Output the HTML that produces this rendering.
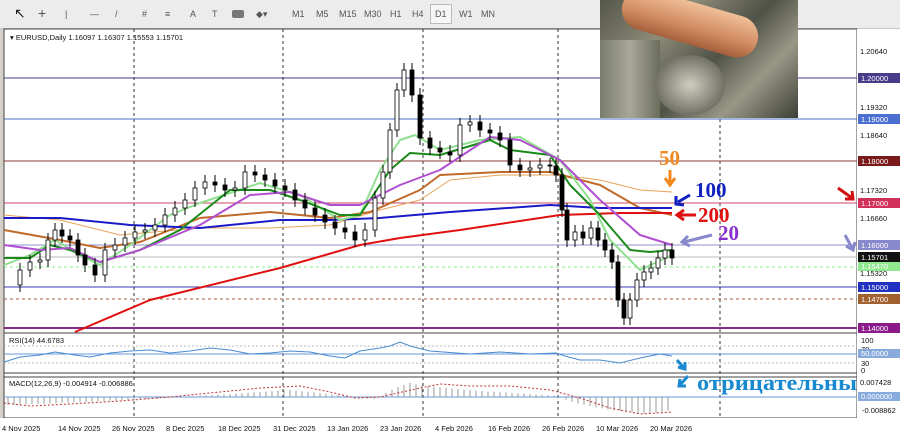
<!DOCTYPE html>
<html><head><meta charset="utf-8"><style>
body{margin:0;width:900px;height:438px;overflow:hidden;background:#d4d0c8;font-family:"Liberation Sans",sans-serif;position:relative}
.tb{position:absolute;left:0;top:0;width:900px;height:28px;background:#ececec;border-bottom:1px solid #c8c8c8}
.tb span{position:absolute;top:9px;font-size:9px;color:#555}
svg{position:absolute;left:0;top:0}
.photo{position:absolute;left:600px;top:0;width:198px;height:118px;overflow:hidden;background:linear-gradient(135deg,#55574a 0%,#8d8a78 30%,#4f5246 55%,#9a9786 75%,#3d3f36 100%)}
.roll{position:absolute;left:20px;top:2px;width:140px;height:42px;border-radius:21px;background:linear-gradient(180deg,#f0c09a,#d08a60 60%,#a5603c);transform:rotate(16deg)}
.face{position:absolute;left:55px;top:55px;width:70px;height:60px;border-radius:50%;background:radial-gradient(#d0cdc0,#4a4a40)}
.bill{position:absolute;left:0;top:40px;width:60px;height:78px;background:linear-gradient(90deg,#7a7c6c,#a8a898,#6a6c5c)}
</style></head><body>
<div class="tb">
<span style="left:14px;font-size:14px;top:5px;color:#222">&#x2196;</span>
<span style="left:38px;font-size:14px;top:5px">+</span>
<span style="left:65px">|</span><span style="left:90px">—</span><span style="left:115px">/</span>
<span style="left:142px">#</span><span style="left:165px">≡</span><span style="left:190px">A</span><span style="left:212px">T</span>
<span style="left:232px;top:10px;width:12px;height:8px;background:#777;border-radius:2px"></span>
<span style="left:256px">◆▾</span>
<span style="left:292px">M1</span><span style="left:316px">M5</span><span style="left:339px">M15</span><span style="left:364px">M30</span><span style="left:390px">H1</span><span style="left:412px">H4</span>
<span style="left:430px;top:4px;padding:4px 4px;border:1px solid #bbb;background:#f6f6f6">D1</span>
<span style="left:459px">W1</span><span style="left:481px">MN</span>
</div>
<svg width="900" height="438" id="s">
<rect x="4" y="29" width="853" height="389" fill="#fff" stroke="#444"/>
<rect x="4" y="333" width="853" height="40" fill="#fff" stroke="#444"/>
<rect x="4" y="377" width="853" height="41" fill="#fff" stroke="#444"/>
<rect x="857" y="29" width="43" height="409" fill="#fff"/>
<rect x="0" y="418" width="900" height="20" fill="#fff"/>
<g stroke="#333" stroke-dasharray="3,3" stroke-width="1">
<line x1="134" y1="29" x2="134" y2="418"/><line x1="283" y1="29" x2="283" y2="418"/><line x1="423" y1="29" x2="423" y2="418"/><line x1="558" y1="29" x2="558" y2="418"/><line x1="720" y1="29" x2="720" y2="418"/></g>
<g stroke-width="1">
<line x1="4" y1="78" x2="857" y2="78" stroke="#3d3d8c"/>
<line x1="4" y1="119" x2="857" y2="119" stroke="#4a6fc0"/>
<line x1="4" y1="161" x2="857" y2="161" stroke="#8c3a3a"/>
<line x1="4" y1="203" x2="857" y2="203" stroke="#c84a6a"/>
<line x1="4" y1="245" x2="857" y2="245" stroke="#9090cc"/>
<line x1="4" y1="257" x2="857" y2="257" stroke="#bbb"/>
<line x1="4" y1="267" x2="857" y2="267" stroke="#8e8" stroke-dasharray="3,3"/>
<line x1="4" y1="287" x2="857" y2="287" stroke="#3838b0"/>
<line x1="4" y1="299" x2="857" y2="299" stroke="#a0603a" stroke-dasharray="3,3"/>
<line x1="4" y1="328" x2="857" y2="328" stroke="#8a2a8a" stroke-width="2"/>
</g>
<g fill="none" stroke-linejoin="round">
<polyline stroke="#e8a45a" stroke-width="1" points="4,215 60,220 120,235 200,228 270,228 330,225 380,210 420,200 450,180 500,175 560,175 600,180 640,190 672,192"/>
<polyline stroke="#c06a2a" stroke-width="2" points="4,230 60,240 100,248 140,242 200,218 270,212 330,218 370,212 420,190 440,175 500,172 550,172 600,185 640,208 672,215"/>
<polyline stroke="#1a1ac8" stroke-width="2" points="4,218 60,218 130,225 200,228 280,220 330,220 380,218 450,212 550,205 600,208 672,208"/>
<polyline stroke="#e01010" stroke-width="2" points="75,332 150,300 280,268 360,245 400,238 460,230 560,215 620,213 672,213"/>
<polyline stroke="#90e090" stroke-width="2" points="4,265 30,255 55,240 80,255 100,265 130,245 170,215 200,203 260,183 300,195 340,220 360,215 380,170 400,140 415,135 440,150 480,140 520,137 560,160 590,200 610,240 640,270 672,255"/>
<polyline stroke="#1a8a1a" stroke-width="2" points="4,258 30,258 50,245 70,250 100,262 140,250 180,230 230,190 270,190 300,200 340,215 360,215 390,170 410,153 440,155 490,140 510,150 550,155 570,185 600,215 630,250 650,252 672,250"/>
<polyline stroke="#b050d0" stroke-width="2" points="4,245 40,250 70,248 100,262 140,250 200,225 250,195 290,192 330,205 360,205 400,185 440,170 490,137 520,140 560,160 600,200 640,235 672,245"/>
</g>
<g id="c"></g>
<line x1="4" y1="354" x2="857" y2="354" stroke="#6a9ad8"/>
<line x1="4" y1="346" x2="857" y2="346" stroke="#bbb" stroke-dasharray="2,2"/>
<line x1="4" y1="363" x2="857" y2="363" stroke="#bbb" stroke-dasharray="2,2"/>
<polyline fill="none" stroke="#4a8ad0" points="4,362 20,357 40,355 55,352 75,355 90,357 110,353 130,351 150,350 170,353 190,351 210,348 230,350 250,354 270,353 290,351 310,352 330,356 345,358 360,351 380,348 390,346 400,342 410,346 430,351 470,354 500,352 530,354 556,353 565,356 580,360 600,360 620,363 640,358 660,354 672,356"/>
<line x1="4" y1="397" x2="857" y2="397" stroke="#6a9ad8"/>
<g id="m" stroke="#999"></g>
<polyline fill="none" stroke="#c03030" stroke-dasharray="2,2" points="4,403 30,406 70,404 120,401 170,397 220,392 260,388 300,386 330,392 355,398 380,397 420,388 440,384 470,386 510,386 550,390 580,398 610,408 640,414 672,412"/>
<g font-size="7.5" fill="#111">
<text x="10" y="40">▾ EURUSD,Daily  1.16097 1.16307 1.15553 1.15701</text>
<text x="9" y="343">RSI(14) 44.6783</text>
<text x="9" y="386">MACD(12,26,9) -0.004914 -0.006886</text>
<text x="860" y="54">1.20640</text><text x="860" y="110">1.19320</text><text x="860" y="138">1.18640</text><text x="860" y="193">1.17320</text><text x="860" y="221">1.16660</text><text x="860" y="276">1.15320</text>
<text x="861" y="343">100</text><text x="861" y="352">70</text><text x="861" y="366">30</text><text x="861" y="373">0</text>
<text x="860" y="385">0.007428</text><text x="862" y="413">-0.008862</text>
</g>
<g font-size="7.5" fill="#fff">
<rect x="858" y="73" width="42" height="10" fill="#4a3a8a"/><text x="861" y="81">1.20000</text>
<rect x="858" y="114" width="42" height="10" fill="#4a6fd0"/><text x="861" y="122">1.19000</text>
<rect x="858" y="156" width="42" height="10" fill="#7a1a1a"/><text x="861" y="164">1.18000</text>
<rect x="858" y="198" width="42" height="10" fill="#d0305a"/><text x="861" y="206">1.17000</text>
<rect x="858" y="240" width="42" height="10" fill="#8888cc"/><text x="861" y="248">1.16000</text>
<rect x="858" y="252" width="42" height="10" fill="#111"/><text x="861" y="260">1.15701</text>
<rect x="858" y="262" width="42" height="9" fill="#90e890"/><text x="861" y="269">1.15470</text>
<rect x="858" y="282" width="42" height="10" fill="#2030c0"/><text x="861" y="290">1.15000</text>
<rect x="858" y="294" width="42" height="10" fill="#a06030"/><text x="861" y="302">1.14700</text>
<rect x="858" y="323" width="42" height="10" fill="#8a1a8a"/><text x="861" y="331">1.14000</text>
<rect x="858" y="349" width="42" height="9" fill="#88aadd"/><text x="861" y="356">50.0000</text>
<rect x="858" y="392" width="42" height="9" fill="#88aadd"/><text x="861" y="399">0.000000</text>
</g>
<g font-size="7.5" fill="#111">
<text x="2" y="431">4 Nov 2025</text><text x="58" y="431">14 Nov 2025</text><text x="112" y="431">26 Nov 2025</text><text x="166" y="431">8 Dec 2025</text><text x="218" y="431">18 Dec 2025</text><text x="273" y="431">31 Dec 2025</text><text x="327" y="431">13 Jan 2026</text><text x="380" y="431">23 Jan 2026</text><text x="435" y="431">4 Feb 2026</text><text x="488" y="431">16 Feb 2026</text><text x="542" y="431">26 Feb 2026</text><text x="596" y="431">10 Mar 2026</text><text x="650" y="431">20 Mar 2026</text>
</g>
<g font-family="Liberation Serif" font-weight="bold">
<text x="659" y="165" font-size="21" fill="#f08a20">50</text>
<text x="695" y="197" font-size="21" fill="#1020c0">100</text>
<text x="698" y="222" font-size="21" fill="#e01010">200</text>
<text x="718" y="240" font-size="21" fill="#8a30d0">20</text>
<text x="697" y="390" font-size="22" fill="#1a8ad0" textLength="160" lengthAdjust="spacingAndGlyphs">отрицательны</text>
</g>
<g stroke-width="3" fill="none">
<path d="M670 170 L670 183 M665 178 L670 185 L675 178" stroke="#f08a20"/>
<path d="M690 195 L678 202 M676 196 L676 204 L684 205" stroke="#1020c0"/>
<path d="M696 215 L678 215 M684 210 L677 215 L684 220" stroke="#e01010"/>
<path d="M712 235 L684 242 M688 236 L682 242 L690 246" stroke="#8888cc"/>
<path d="M838 188 L852 198 M845 199 L853 199 L852 191" stroke="#d01010"/>
<path d="M845 235 L852 248 M846 246 L853 250 L855 242" stroke="#8888cc"/>
<path d="M677 360 L684 368 M678 367 L685 369 L685 362" stroke="#1a8ad0"/>
<path d="M688 376 L680 385 M680 379 L679 386 L686 386" stroke="#1a8ad0"/>
</g>
</svg>
<div class="photo"><div class="bill"></div><div class="roll"></div><div class="face"></div></div>
<script>
var P=[[8,285],[20,270],[30,262],[40,260],[48,240],[55,230],[62,236],[70,240],[78,255],[85,265],[95,275],[105,250],[115,245],[125,238],[135,232],[145,230],[155,225],[165,215],[175,208],[185,200],[195,188],[205,182],[215,185],[225,190],[235,188],[245,172],[255,175],[265,180],[275,186],[285,190],[295,200],[305,208],[315,215],[325,222],[335,228],[345,232],[355,240],[365,230],[375,198],[383,172],[390,130],[397,90],[404,70],[412,95],[420,138],[430,148],[440,152],[450,155],[460,125],[470,122],[480,130],[490,133],[500,140],[510,165],[520,170],[530,168],[540,165],[550,166],[556,175],[562,210],[567,240],[575,232],[583,238],[591,228],[598,240],[605,250],[612,262],[618,300],[624,318],[630,300],[637,280],[644,272],[651,268],[658,258],[665,250],[672,258]];
var g=document.getElementById('c'),m=document.getElementById('m'),h='';
for(var i=1;i<P.length;i++){var x=P[i][0],o=P[i-1][1],c=P[i][1],t=Math.min(o,c),b=Math.max(o,c),up=c<o;
h+='<line x1="'+x+'" y1="'+(t-7)+'" x2="'+x+'" y2="'+(b+7)+'" stroke="#000"/><rect x="'+(x-2)+'" y="'+t+'" width="4" height="'+Math.max(1,b-t)+'" fill="'+(up?'#fff':'#000')+'" stroke="#000" stroke-width="0.8"/>';}
g.innerHTML=h;
var K=[[4,-8],[60,-6],[130,-3],[180,0],[230,3],[290,7],[330,3],[360,-1],[375,-2],[395,9],[410,14],[425,11],[480,6],[530,3],[556,1],[575,-6],[610,-13],[650,-17],[672,-13]];
function f(x){for(var j=1;j<K.length;j++){if(x<=K[j][0]){var a=K[j-1],b=K[j];return a[1]+(b[1]-a[1])*(x-a[0])/(b[0]-a[0]);}}return -13;}
var mh='';for(var x=8;x<=672;x+=6){var y=397-f(x);mh+='<line x1="'+x+'" y1="397" x2="'+x+'" y2="'+y.toFixed(1)+'"/>';}
m.innerHTML=mh;
</script>
</body></html>
